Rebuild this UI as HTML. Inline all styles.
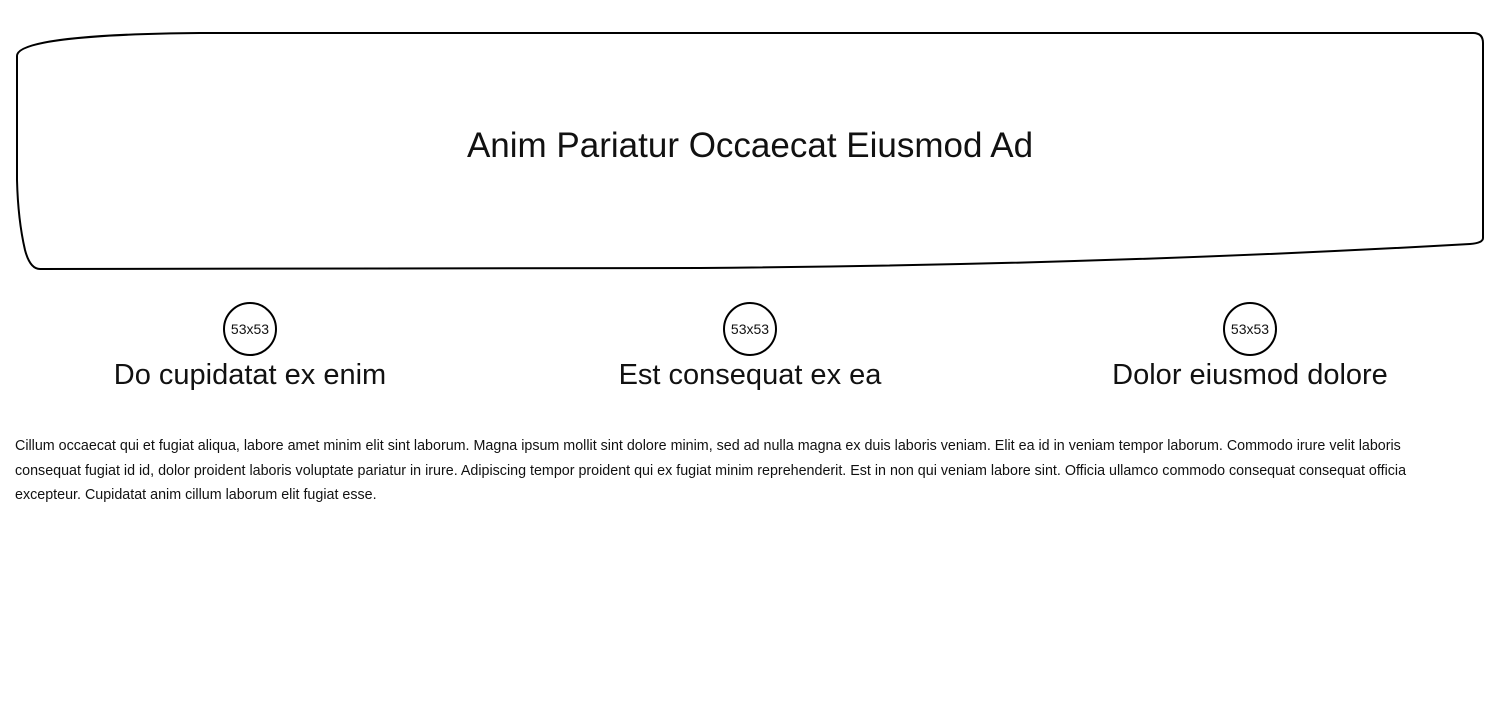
<!DOCTYPE html>
<html><head><meta charset="utf-8"><style>
html,body{margin:0;padding:0;background:#fff;width:1500px;height:720px;overflow:hidden;font-family:"Liberation Sans",sans-serif;color:#111}
svg.box{position:absolute;left:0;top:0}
h1{position:absolute;left:0;width:1500px;top:122px;margin:0;text-align:center;font-weight:normal;font-size:35px;line-height:48px}
.col{position:absolute;top:302px;width:500px;text-align:center}
.circ{width:50px;height:50px;border:2px solid #000;border-radius:50%;margin:0 auto;display:flex;align-items:center;justify-content:center;font-size:14px;box-sizing:content-box}
.col h2{margin:0;font-weight:normal;font-size:29px;line-height:38px}
p{position:absolute;left:15px;top:434px;width:1440px;margin:0;font-size:14.3px;line-height:24.5px}
</style></head><body>
<svg class="box" width="1500" height="300">
<path d="M17 56 C17 42 80 34 200 33 L1473 33 Q1483 33 1483 43 L1483 238 Q1483 243 1470 244 Q1100 265 700 268 L40 269 Q30 269 25 250 Q18 220 17 180 Z" fill="none" stroke="#000" stroke-width="2"/>
</svg>
<h1>Anim Pariatur Occaecat Eiusmod Ad</h1>
<div class="col" style="left:0"><div class="circ">53x53</div><h2>Do cupidatat ex enim</h2></div>
<div class="col" style="left:500px"><div class="circ">53x53</div><h2>Est consequat ex ea</h2></div>
<div class="col" style="left:1000px"><div class="circ">53x53</div><h2>Dolor eiusmod dolore</h2></div>
<p>Cillum occaecat qui et fugiat aliqua, labore amet minim elit sint laborum. Magna ipsum mollit sint dolore minim, sed ad nulla magna ex duis laboris veniam. Elit ea id in veniam tempor laborum. Commodo irure velit laboris consequat fugiat id id, dolor proident laboris voluptate pariatur in irure. Adipiscing tempor proident qui ex fugiat minim reprehenderit. Est in non qui veniam labore sint. Officia ullamco commodo consequat consequat officia excepteur. Cupidatat anim cillum laborum elit fugiat esse.</p>
</body></html>
